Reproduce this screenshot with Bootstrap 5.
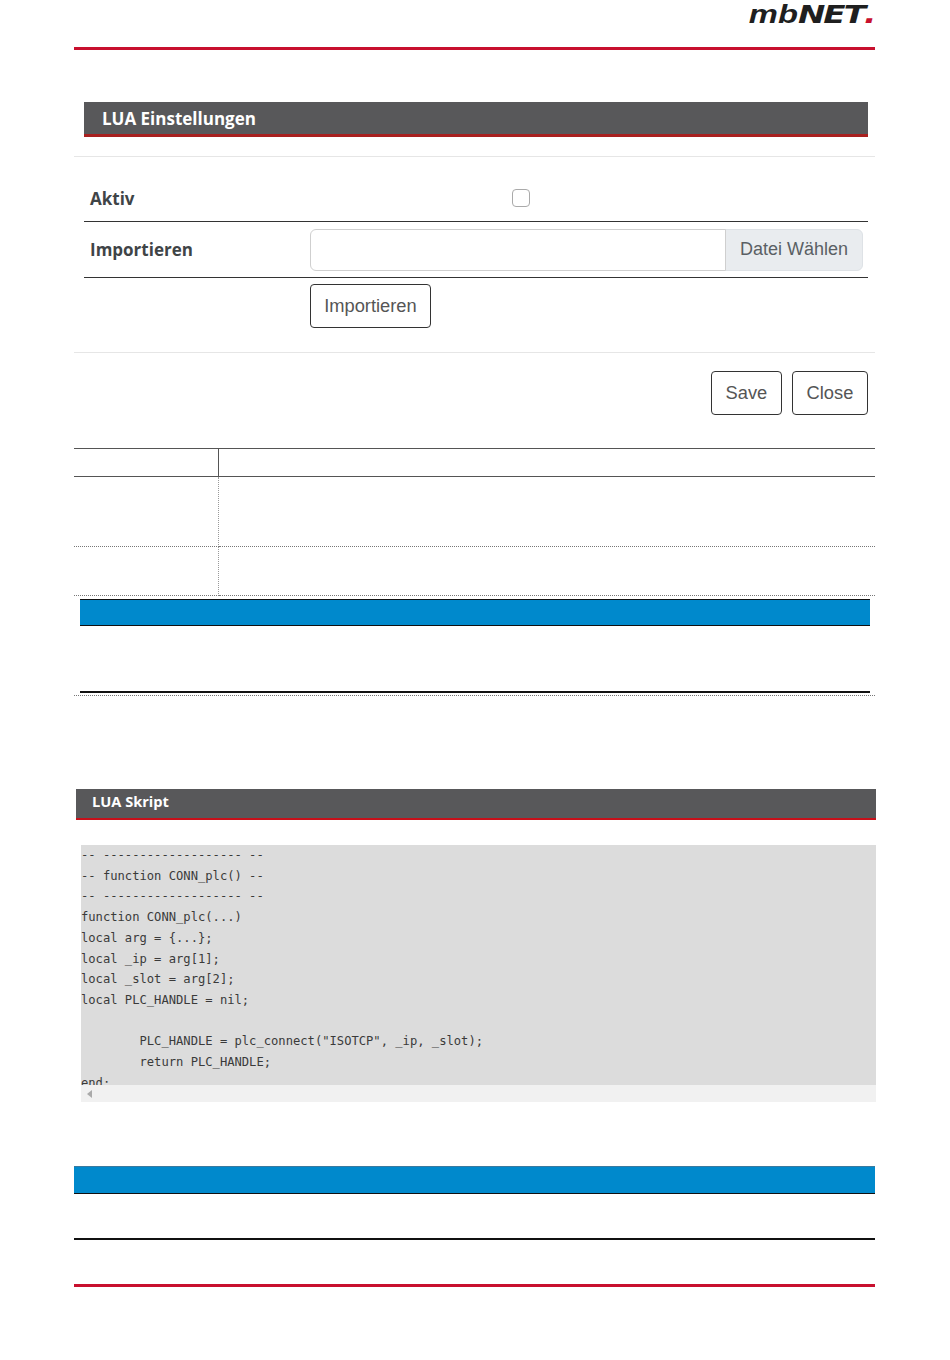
<!DOCTYPE html>
<html lang="de"><head><meta charset="utf-8"><title>LUA Einstellungen</title>
<link href="https://cdn.jsdelivr.net/npm/bootstrap@5.3.0/dist/css/bootstrap.min.css" rel="stylesheet">
<style>
body{background:#fff;margin:0;font-family:"Open Sans",sans-serif}
.pg{margin-left:74px;width:801px}
.toplogo{height:47px}
.logotxt{font-family:"Liberation Sans",sans-serif;font-style:italic;font-weight:700;font-size:25px;line-height:29px;height:29px;margin-right:-2px;color:#1f1f1f;transform:scaleX(1.31);transform-origin:right center;white-space:nowrap}
.logotxt b{font-weight:700;font-family:"DejaVu Sans",sans-serif;letter-spacing:-1.5px}
.logotxt i{color:#c8102e;font-style:italic;font-family:"DejaVu Sans",sans-serif}
.redline{height:3px;background:#c8102e}
.head1{margin:52px 7px 0 10px;height:35px;background:#58585a;border-bottom:3px solid #a8201f;color:#fff;font-weight:700;font-size:17px;line-height:34px;padding-left:18px}
.rule{height:1px;background:#e6e6e6}
.rule1{margin-top:19px}
.frm{margin:0 7px 0 10px}
.frow{border-bottom:1px solid #333}
.lbl{width:226px;padding-left:6px;font-weight:700;font-size:17px;color:#3f4447}
.r1{height:65px;padding-top:29px}
.chk{margin-left:202px;width:18px;height:18px;border:1px solid #aaa;border-radius:4px;margin-top:3px}
.r2{height:56px}
.grp{width:553px;height:42px}
.grp .form-control{height:42px;border-color:#cfcfcf}
.grp .input-group-text{font-family:"Liberation Sans",sans-serif;font-size:18px;color:#5a5f64;background:#e9ecef;border-color:#dee2e6;padding:0 14px}
.r3{padding:6px 0 0 226px}
.btnx{font-family:"Liberation Sans",sans-serif;font-size:18.3px;color:#555;border:1px solid #333;border-radius:4px;height:44px;padding:0 13.2px;background:#fff;line-height:40px}
.rule2{margin-top:24px}
.acts{margin:18px 7px 0 0;gap:10px}
.acts .btnx{padding:0 13.7px}
.tbl{margin-top:33px;width:801px;border-collapse:collapse;table-layout:fixed}
.tbl th,.tbl td{padding:0}
.tbl th{height:28px;border-top:1px solid #555;border-bottom:1px solid #555}
.tbl th:first-child{width:144px;border-right:1px solid #555}
.tbl td{border-bottom:1px dotted #777}
.tbl td:first-child{border-right:1px dotted #999}
.t1{height:70px}.t2{height:49px}
.bluebar{height:27px;background:#0089cc;border-top:1px solid #111;border-bottom:1px solid #111}
.b1{margin:3px 5px 0 6px}
.blk{height:2px;background:#111;margin:65px 5px 0 6px}
.dots{border-top:1px dotted #777;margin-top:2px}
.head2{margin:93px -1px 0 2px;height:31px;background:#58585a;border-bottom:2px solid #c8101a;color:#fff;font-weight:700;font-size:14.6px;line-height:25px;padding-left:16px}
.codewrap{margin:25px -1px 0 7px;height:257px;background:#f1f1f1;position:relative}
.codebox{height:240px;background:#dcdcdc;overflow:hidden}
.codebox pre{margin:0;font-family:"DejaVu Sans Mono",monospace;font-size:12.15px;line-height:20.7px;color:#3a3a3a;overflow:hidden}
.arr{position:absolute;left:6px;bottom:4px;width:0;height:0;border-top:4px solid transparent;border-bottom:4px solid transparent;border-right:5px solid #aaa}
.b2{margin-top:64px;height:28px;border-top-color:#3a7a9f}
.blk2{height:2px;background:#111;margin-top:44px}
.red2{margin-top:44px}
</style></head><body>
<div class="pg">
<div class="toplogo d-flex justify-content-end"><div class="logotxt">mb<b>NET</b><i>.</i></div></div>
<div class="redline"></div>
<div class="head1">LUA Einstellungen</div>
<div class="rule rule1"></div>
<div class="frm">
 <div class="frow r1 d-flex"><div class="lbl">Aktiv</div><div class="chk"></div></div>
 <div class="frow r2 d-flex align-items-center"><div class="lbl">Importieren</div>
  <div class="input-group grp"><input class="form-control" type="text" aria-label="Datei"><span class="input-group-text">Datei Wählen</span></div></div>
 <div class="r3"><button class="btn btnx" type="button">Importieren</button></div>
</div>
<div class="rule rule2"></div>
<div class="acts d-flex justify-content-end"><button class="btn btnx" type="button">Save</button><button class="btn btnx" type="button">Close</button></div>
<table class="tbl"><tbody>
<tr><th></th><th></th></tr>
<tr class="t1"><td></td><td></td></tr>
<tr class="t2"><td></td><td></td></tr>
</tbody></table>
<div class="bluebar b1"></div>
<div class="blk"></div>
<div class="dots"></div>
<div class="head2">LUA Skript</div>
<div class="codewrap"><div class="codebox"><pre>-- ------------------- --
-- function CONN_plc() --
-- ------------------- --
function CONN_plc(...)
local arg = {...};
local _ip = arg[1];
local _slot = arg[2];
local PLC_HANDLE = nil;

        PLC_HANDLE = plc_connect("ISOTCP", _ip, _slot);
        return PLC_HANDLE;
end;</pre></div><div class="arr"></div></div>
<div class="bluebar b2"></div>
<div class="blk2"></div>
<div class="redline red2"></div>
</div>
<script src="https://cdn.jsdelivr.net/npm/bootstrap@5.3.0/dist/js/bootstrap.bundle.min.js"></script>
</body></html>
